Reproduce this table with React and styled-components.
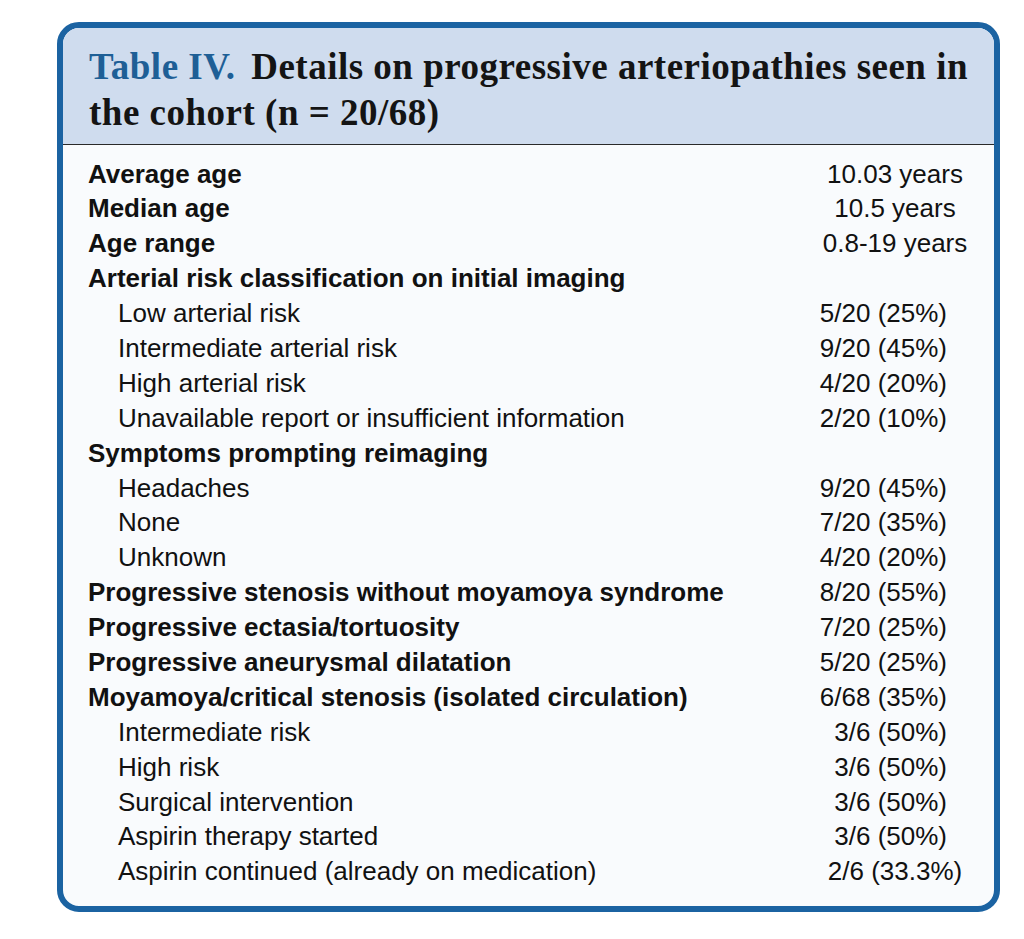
import React from "react";
import styled, { createGlobalStyle } from "styled-components";

const Global = createGlobalStyle`
  html, body { margin: 0; padding: 0; background: #ffffff; }
  body { font-family: "Liberation Sans", Arial, sans-serif; }
`;

const Page = styled.div`
  padding: 22px 0 0 57px;
`;

const Card = styled.div`
  width: 943px;
  box-sizing: border-box;
  border: 6px solid #1b63a2;
  border-radius: 22px;
  overflow: hidden;
  background: #f9fbfd;
`;

const Header = styled.h2`
  margin: 0;
  background: #cfdcee;
  padding: 16px 10px 8px 26px;
  border-bottom: 1.5px solid #2a2a2a;
  font-family: "Liberation Serif", "Times New Roman", serif;
  font-weight: 700;
  font-size: 37px;
  letter-spacing: 0.5px;
  line-height: 46px;
  color: #141414;
`;

const Label = styled.span`
  display: inline-block;
  color: #1e5f96;
  padding-right: 6px;
`;

const Caption = styled.span`
  color: #141414;
`;

const Body = styled.div`
  padding: 11.5px 22px 17px 25px;
  display: grid;
  grid-template-columns: 1fr 154px;
`;

const Cell = styled.div`
  font-size: 26px;
  line-height: 34.9px;
  height: 34.9px;
  white-space: nowrap;
  color: #111;
  font-weight: ${(p) => (p.$bold ? 700 : 400)};
  padding-left: ${(p) => (p.$indent ? "30px" : "0")};
`;

const Value = styled.div`
  font-size: 26px;
  line-height: 34.9px;
  height: 34.9px;
  white-space: nowrap;
  color: #111;
  text-align: ${(p) => (p.$center ? "center" : "right")};
  padding-right: ${(p) => (p.$center ? "0" : "25px")};
`;

const rows = [
  { t: "Average age", v: "10.03 years", b: true, c: true },
  { t: "Median age", v: "10.5 years", b: true, c: true },
  { t: "Age range", v: "0.8-19 years", b: true, c: true },
  { t: "Arterial risk classification on initial imaging", v: "", b: true },
  { t: "Low arterial risk", v: "5/20 (25%)", i: true },
  { t: "Intermediate arterial risk", v: "9/20 (45%)", i: true },
  { t: "High arterial risk", v: "4/20 (20%)", i: true },
  { t: "Unavailable report or insufficient information", v: "2/20 (10%)", i: true },
  { t: "Symptoms prompting reimaging", v: "", b: true },
  { t: "Headaches", v: "9/20 (45%)", i: true },
  { t: "None", v: "7/20 (35%)", i: true },
  { t: "Unknown", v: "4/20 (20%)", i: true },
  { t: "Progressive stenosis without moyamoya syndrome", v: "8/20 (55%)", b: true },
  { t: "Progressive ectasia/tortuosity", v: "7/20 (25%)", b: true },
  { t: "Progressive aneurysmal dilatation", v: "5/20 (25%)", b: true },
  { t: "Moyamoya/critical stenosis (isolated circulation)", v: "6/68 (35%)", b: true },
  { t: "Intermediate risk", v: "3/6 (50%)", i: true },
  { t: "High risk", v: "3/6 (50%)", i: true },
  { t: "Surgical intervention", v: "3/6 (50%)", i: true },
  { t: "Aspirin therapy started", v: "3/6 (50%)", i: true },
  { t: "Aspirin continued (already on medication)", v: "2/6 (33.3%)", i: true, c: true },
];

export default function App() {
  return (
    <>
      <Global />
      <Page>
        <Card>
          <Header>
            <Label>Table IV.</Label>{" "}
            <Caption>Details on progressive arteriopathies seen in the cohort (n = 20/68)</Caption>
          </Header>
          <Body>
            {rows.map((r, k) => (
              <React.Fragment key={k}>
                <Cell $bold={r.b} $indent={r.i}>{r.t}</Cell>
                <Value $center={r.c}>{r.v}</Value>
              </React.Fragment>
            ))}
          </Body>
        </Card>
      </Page>
    </>
  );
}
